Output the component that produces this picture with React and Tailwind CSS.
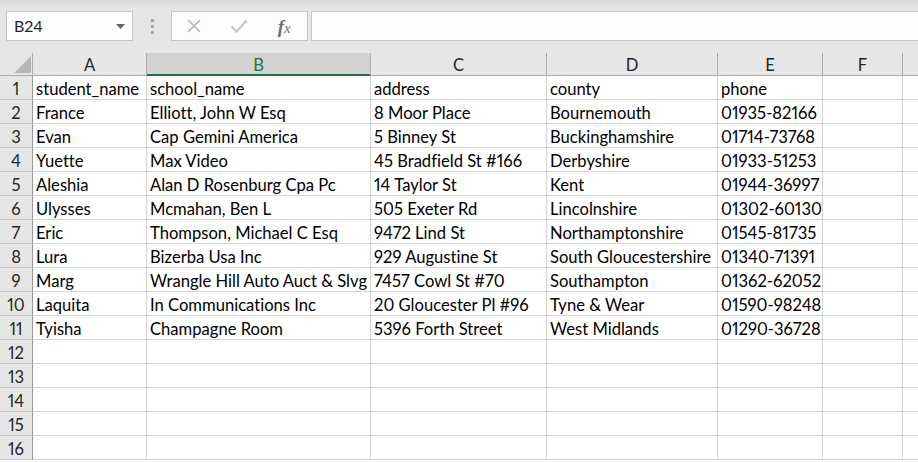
import React from 'react'

const cols = [
  { key: 'A', w: 'w-[114px]' },
  { key: 'B', w: 'w-[224px]' },
  { key: 'C', w: 'w-[176px]' },
  { key: 'D', w: 'w-[171px]' },
  { key: 'E', w: 'w-[105px]' },
  { key: 'F', w: 'w-[80px]' },
  { key: 'G', w: 'w-[100px]', hidden: true },
]

const data = [
  ['student_name', 'school_name', 'address', 'county', 'phone'],
  ['France', 'Elliott, John W Esq', '8 Moor Place', 'Bournemouth', '01935-82166'],
  ['Evan', 'Cap Gemini America', '5 Binney St', 'Buckinghamshire', '01714-73768'],
  ['Yuette', 'Max Video', '45 Bradfield St #166', 'Derbyshire', '01933-51253'],
  ['Aleshia', 'Alan D Rosenburg Cpa Pc', '14 Taylor St', 'Kent', '01944-36997'],
  ['Ulysses', 'Mcmahan, Ben L', '505 Exeter Rd', 'Lincolnshire', '01302-60130'],
  ['Eric', 'Thompson, Michael C Esq', '9472 Lind St', 'Northamptonshire', '01545-81735'],
  ['Lura', 'Bizerba Usa Inc', '929 Augustine St', 'South Gloucestershire', '01340-71391'],
  ['Marg', 'Wrangle Hill Auto Auct & Slvg', '7457 Cowl St #70', 'Southampton', '01362-62052'],
  ['Laquita', 'In Communications Inc', '20 Gloucester Pl #96', 'Tyne & Wear', '01590-98248'],
  ['Tyisha', 'Champagne Room', '5396 Forth Street', 'West Midlands', '01290-36728'],
  [], [], [], [], [],
]

const FormulaBar = () => (
  <div className="h-[53px] bg-gradient-to-b from-[#d6d6d6] via-[#e6e6e6] via-[15%] to-[#e6e6e6] flex items-start pt-[11px]">
    <div className="ml-[6px] w-[127px] h-[30px] bg-[#fdfdfd] border border-[#c6c6c6] flex items-center justify-between pl-[7px] pr-[7px]">
      <span className="text-[16px] text-[#262626]">B24</span>
      <svg width="9" height="5" viewBox="0 0 9 5"><path d="M0 0h9L4.5 5z" fill="#666" /></svg>
    </div>
    <div className="w-[38px] h-[30px] flex flex-col items-center justify-center gap-[3px]">
      <span className="w-[3px] h-[3px] bg-[#a6a6a6]" />
      <span className="w-[3px] h-[3px] bg-[#a6a6a6]" />
      <span className="w-[3px] h-[3px] bg-[#a6a6a6]" />
    </div>
    <div className="w-[137px] h-[30px] bg-[#fdfdfd] border border-[#c6c6c6] flex items-center">
      <div className="w-[44px] flex justify-center">
        <svg width="16" height="16" viewBox="0 0 16 16"><path d="M2 2l12 12M14 2L2 14" stroke="#b3b3b3" strokeWidth="1.6" /></svg>
      </div>
      <div className="w-[46px] flex justify-center">
        <svg width="18" height="16" viewBox="0 0 18 16"><path d="M1.5 8.5l5 5L16.5 2.5" stroke="#c8c8c8" strokeWidth="2.4" fill="none" /></svg>
      </div>
      <div className="w-[46px] flex items-baseline justify-center text-[#707070] italic font-['Liberation_Serif',serif] leading-none">
        <span className="text-[19px] font-bold">f</span>
        <span className="text-[15px]">x</span>
      </div>
    </div>
    <div className="ml-[3px] flex-1 h-[30px] bg-[#fdfdfd] border border-[#c6c6c6] border-r-0" />
  </div>
)

const HeaderRow = () => (
  <div className="flex h-[23px] bg-[#e6e6e6] border-b border-[#ababab]">
    <div className="w-[33px] shrink-0 border-r border-[#ababab] relative">
      <svg className="absolute left-[14px] top-[3px]" width="17" height="17" viewBox="0 0 17 17"><path d="M17 0V17H0z" fill="#b7b7b7" /></svg>
    </div>
    {cols.map((c) => (
      <div
        key={c.key}
        className={
          c.key === 'B'
            ? `${c.w} shrink-0 border-r border-[#ababab] bg-[#d2d2d2] text-[#217346] flex items-center justify-center pt-[2px] relative`
            : `${c.w} shrink-0 border-r border-[#ababab] text-[#262626] flex items-center justify-center pt-[2px]`
        }
      >
        {!c.hidden && c.key}
        {c.key === 'B' && <span className="absolute left-0 right-0 bottom-[-1px] h-[2px] bg-[#217346]" />}
      </div>
    ))}
  </div>
)

const DataRow = ({ n, values }) => (
  <div className="flex h-[24px]">
    <div className="w-[33px] shrink-0 bg-[#e6e6e6] border-r border-[#9b9b9b] border-b border-b-[#c8c8c8] flex items-center justify-center pt-[3px] text-[#262626]">
      {n}
    </div>
    {cols.map((c, i) => (
      <div key={c.key} className={`${c.w} shrink-0 border-r border-b border-[#d4d4d4] bg-white pl-[3px] pt-[3px] flex items-center whitespace-nowrap overflow-hidden text-black`}>
        {values[i] || ''}
      </div>
    ))}
  </div>
)

export default function App() {
  return (
    <div className="w-[918px] h-[462px] overflow-hidden bg-white font-['Lato','Liberation_Sans',sans-serif] text-[16.6px] leading-none proportional-nums [font-variant-ligatures:none]">
      <FormulaBar />
      <HeaderRow />
      {data.map((row, i) => (
        <DataRow key={i} n={i + 1} values={row} />
      ))}
    </div>
  )
}
